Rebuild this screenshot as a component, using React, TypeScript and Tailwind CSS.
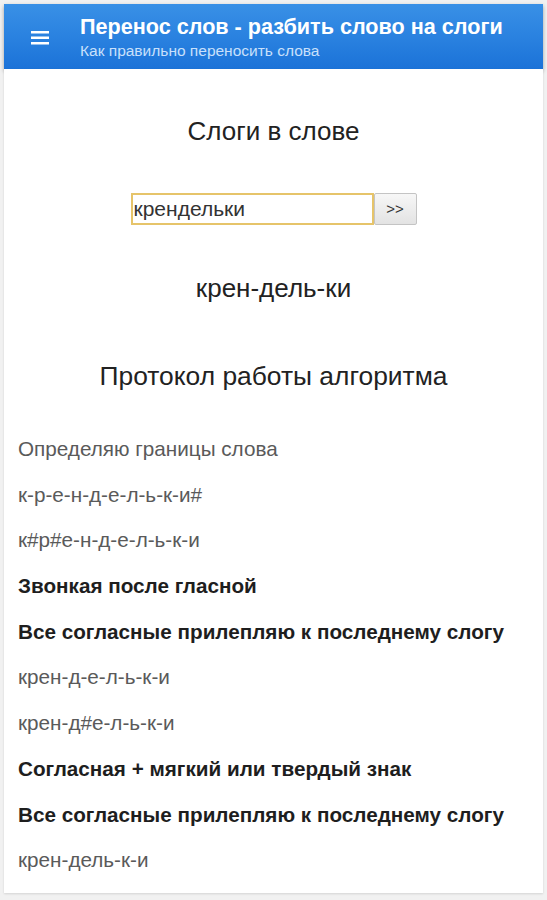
import { useState } from "react";

const STEPS = [
  { text: "Определяю границы слова", bold: false },
  { text: "к-р-е-н-д-е-л-ь-к-и#", bold: false },
  { text: "к#р#е-н-д-е-л-ь-к-и", bold: false },
  { text: "Звонкая после гласной", bold: true },
  { text: "Все согласные прилепляю к последнему слогу", bold: true },
  { text: "крен-д-е-л-ь-к-и", bold: false },
  { text: "крен-д#е-л-ь-к-и", bold: false },
  { text: "Согласная + мягкий или твердый знак", bold: true },
  { text: "Все согласные прилепляю к последнему слогу", bold: true },
  { text: "крен-дель-к-и", bold: false },
];

export default function App() {
  const [word, setWord] = useState("крендельки");

  return (
    <div className="min-h-[900px] bg-[#f1f1f1] px-1 pt-1 font-['Liberation_Sans',Arial,sans-serif]">
      <header className="flex h-[65px] items-center bg-gradient-to-b from-[#3990e6] via-[#2a82e0] to-[#1b72d8] shadow-[0_2px_4px_rgba(0,0,0,0.35)]">
        <div className="flex w-[76px] justify-center pr-1">
          <svg width="18" height="14" viewBox="0 0 18 14" className="mt-[2px]">
            <rect x="0" y="0" width="18" height="2.5" fill="white" />
            <rect x="0" y="5.5" width="18" height="2.5" fill="white" />
            <rect x="0" y="11" width="18" height="2.5" fill="white" />
          </svg>
        </div>
        <div className="flex flex-col">
          <h1 className="text-[21.6px] leading-[26px] font-bold text-white">Перенос слов - разбить слово на слоги</h1>
          <p className="mt-[2px] text-[15.5px] leading-[18px] text-[#c9e0fb]">Как правильно переносить слова</p>
        </div>
      </header>

      <main className="h-[824px] bg-white pt-[47px] shadow-[0_1px_2px_rgba(0,0,0,0.12)]">
        <h2 className="text-center text-[26px] leading-[30px] text-[#222]">Слоги в слове</h2>

        <div className="mt-[47px] flex justify-center">
          <input
            value={word}
            onChange={(e) => setWord(e.target.value)}
            className="h-[32px] w-[243px] border-2 border-[#e6c46a] bg-white px-[1px] text-[21px] text-[#333] outline-none"
          />
          <button className="h-[32px] w-[43px] rounded-[2px] border border-[#c4c4c4] bg-gradient-to-b from-[#f7f7f7] to-[#e3e3e3] text-[15px] text-[#333]">
            &gt;&gt;
          </button>
        </div>

        <p className="mt-[48px] text-center text-[26px] leading-[30px] text-[#222]">крен-дель-ки</p>

        <h2 className="mt-[58px] text-center text-[26.4px] leading-[30px] text-[#222]">Протокол работы алгоритма</h2>

        <ul className="mt-[35px] flex flex-col px-[14px]">
          {STEPS.map((s, i) => (
            <li
              key={i}
              className={`h-[45.7px] text-[20.7px] leading-[45px] ${s.bold ? "font-bold text-[#1e1e1e]" : "text-[#5a5a5a]"}`}
            >
              {s.text}
            </li>
          ))}
        </ul>
      </main>
    </div>
  );
}
